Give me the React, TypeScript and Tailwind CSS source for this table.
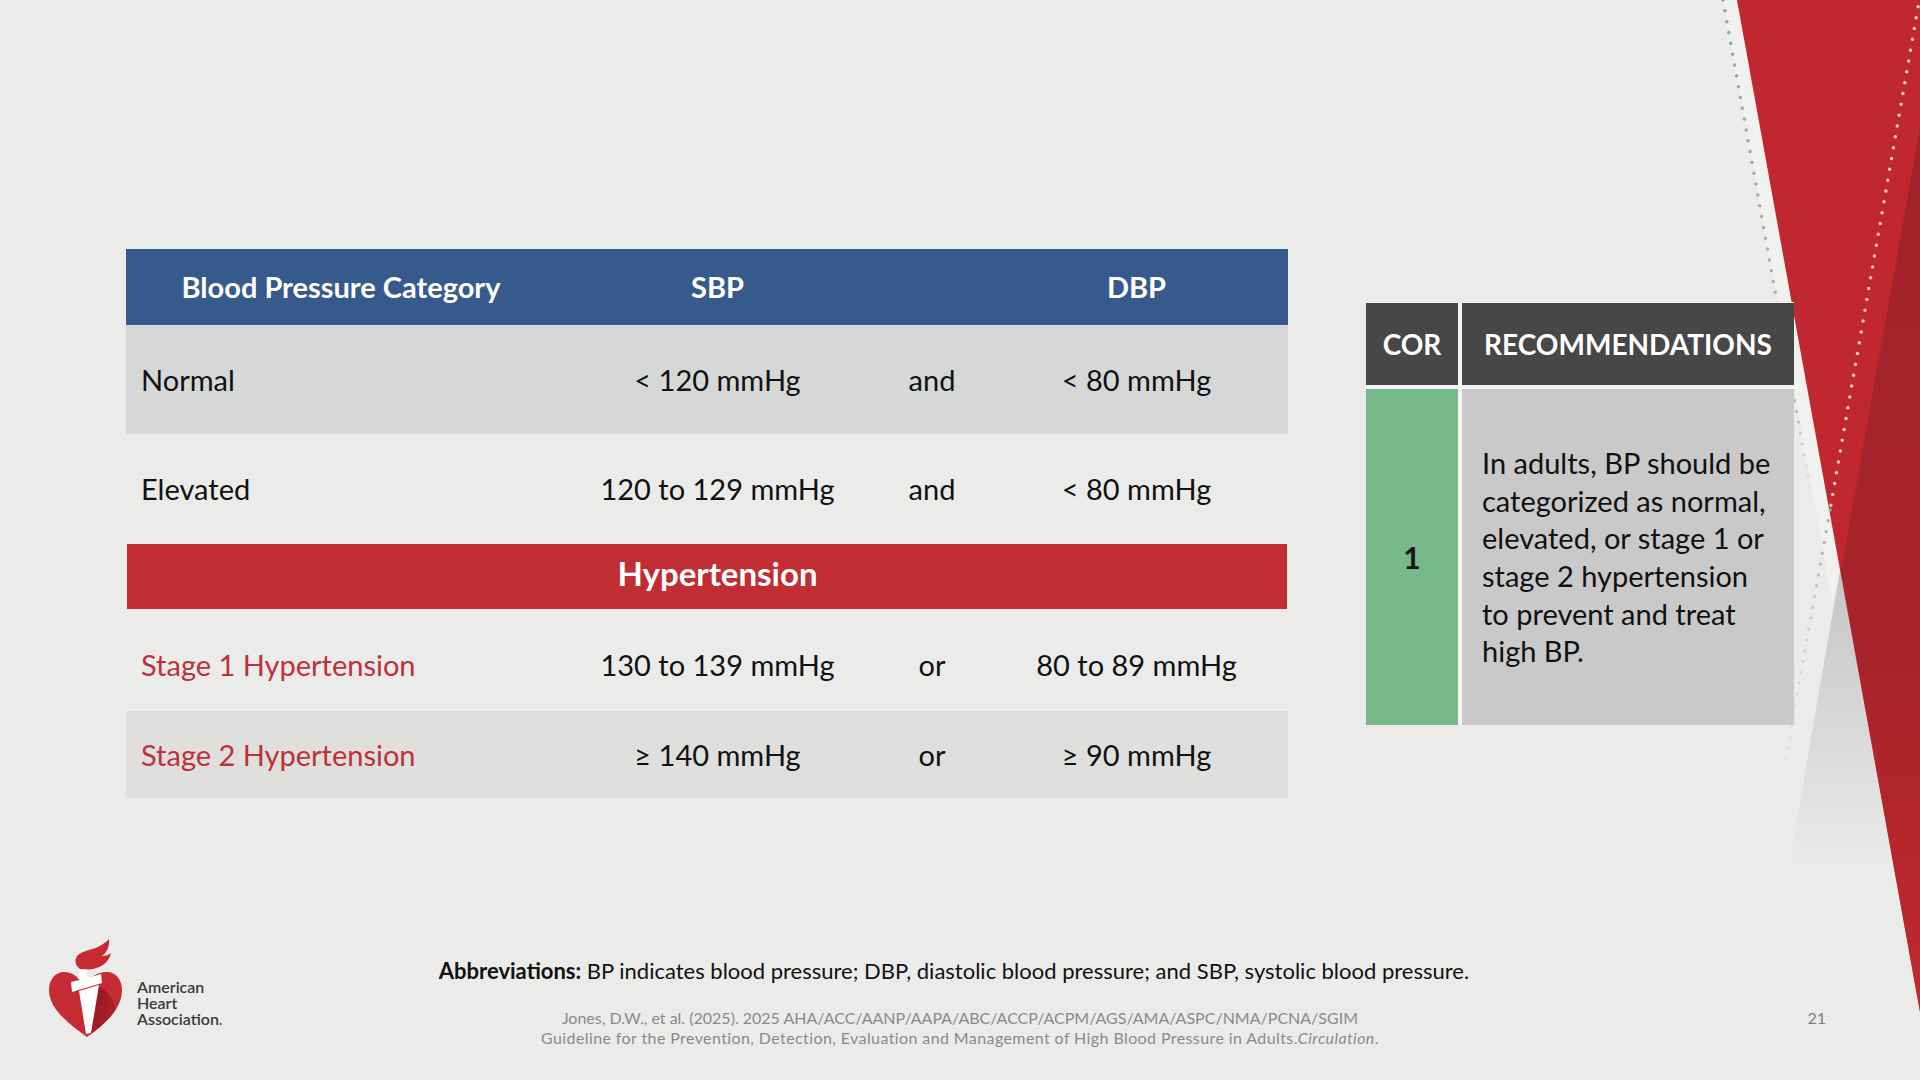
import React from 'react';

const rows = [
  { label: 'Normal', sbp: '< 120 mmHg', join: 'and', dbp: '< 80 mmHg', box: 'h-[109px] bg-[#d6d8d8]', labelTone: 'text-[#111111]' },
  { label: 'Elevated', sbp: '120 to 129 mmHg', join: 'and', dbp: '< 80 mmHg', box: 'h-[110px]', labelTone: 'text-[#111111]' },
];

const stages = [
  { label: 'Stage 1 Hypertension', sbp: '130 to 139 mmHg', join: 'or', dbp: '80 to 89 mmHg', box: 'h-[102px] pt-[10px]' },
  { label: 'Stage 2 Hypertension', sbp: '≥ 140 mmHg', join: 'or', dbp: '≥ 90 mmHg', box: 'h-[87px] bg-[#dfdfde]' },
];

const recLines = [
  'In adults, BP should be',
  'categorized as normal,',
  'elevated, or stage 1 or',
  'stage 2 hypertension',
  'to prevent and treat',
  'high BP.',
];

const heart =
  'M38 47 C34 39 27 34 19 34 C10 34 4 42 4 52 C4 71 24 86 42 99 C60 86 77 71 77 52 C77 42 71 34 62 34 C52 34 44 40 38 47 Z';

const AhaLogo = () => (
  <svg width="80" height="100" viewBox="0 0 80 100">
    <defs>
      <clipPath id="aha-heart">
        <path d={heart} />
      </clipPath>
      <linearGradient id="aha-shade" x1="0" y1="0" x2="1" y2="1">
        <stop offset="0" stopColor="#8f1820" />
        <stop offset="1" stopColor="#b8232c" />
      </linearGradient>
    </defs>
    <path d={heart} fill="#c62a32" />
    <g clipPath="url(#aha-heart)">
      <path d="M53 48 C62 52 70 62 72 76 L60 104 L44 104 Z" fill="url(#aha-shade)" />
    </g>
    {/* torch handle + rim */}
    <path d="M34 53 L54 47 L46 95 L41 96 Z" fill="#ffffff" />
    <path d="M26 44 C36 42 46 39 56 36 L57 45 C47 48 37 51 27 54 Z" fill="#ffffff" />
    <path d="M33 41 C32 35 35 31 40 30 L44 31 C41 34 41 38 43 40 Z" fill="#ffffff" />
    {/* flame */}
    <path
      d="M35 31 C28 26 29 17 38 14 C46 11 53 10 58 6 C61 4 63 2 64 1 C65 8 62 14 57 18 C61 18 64 17 66 15 C64 24 57 29 48 31 C44 32 39 31 35 31 Z"
      fill="#c62a32"
    />
  </svg>
);

const Decoration = () => (
  <svg className="absolute inset-0 w-full h-full pointer-events-none" viewBox="0 0 1920 1080" preserveAspectRatio="none">
    <defs>
      <linearGradient id="dark-red" x1="0" y1="0" x2="0" y2="1">
        <stop offset="0" stopColor="#a2222a" />
        <stop offset="0.6" stopColor="#a8242b" />
        <stop offset="1" stopColor="#c1282e" />
      </linearGradient>
      <linearGradient id="grey-wedge" x1="0" y1="0" x2="0" y2="1">
        <stop offset="0" stopColor="#c4c4c4" />
        <stop offset="0.55" stopColor="#d9d9d9" />
        <stop offset="1" stopColor="#ebebea" />
      </linearGradient>
      <linearGradient id="fade-b" gradientUnits="userSpaceOnUse" x1="0" y1="0" x2="0" y2="560">
        <stop offset="0" stopColor="#9c9c9c" />
        <stop offset="0.7" stopColor="#b4b4b4" />
        <stop offset="1" stopColor="#ebebea" stopOpacity="0" />
      </linearGradient>
      <linearGradient id="fade-a" gradientUnits="userSpaceOnUse" x1="0" y1="510" x2="0" y2="880">
        <stop offset="0" stopColor="#a9a9a9" />
        <stop offset="1" stopColor="#ebebea" stopOpacity="0" />
      </linearGradient>
    </defs>
    <path d="M1723 0 L1737 0 L1841 571 L1832 600 Z" fill="#f1f1f0" />
    <path d="M1841 565 L1896 870 L1788 870 Z" fill="url(#grey-wedge)" />
    <path d="M1737 0 L1920 0 L1920 1012 Z" fill="#c1272e" />
    <path d="M1920 127 L1841 571 L1920 1012 Z" fill="url(#dark-red)" />
    <line x1="1723" y1="0" x2="1823" y2="560" stroke="url(#fade-b)" strokeWidth="3.5" strokeLinecap="round" strokeDasharray="0 11" />
    <line x1="1920" y1="-4" x2="1830" y2="510" stroke="#eecaca" strokeWidth="3.5" strokeLinecap="round" strokeDasharray="0 11" />
    <line x1="1830" y1="510" x2="1764" y2="880" stroke="url(#fade-a)" strokeWidth="3.5" strokeLinecap="round" strokeDasharray="0 11" />
  </svg>
);

export default function App() {
  return (
    <div className="relative w-[1920px] h-[1080px] overflow-hidden bg-[#ebebea] font-['Lato',sans-serif]">
      <Decoration />

      <div className="relative flex flex-col h-full">
        <main className="flex items-start pl-[126px] pt-[249px]">
          {/* BP TABLE */}
          <div className="w-[1162px] flex flex-col text-[29px] text-[#111111]">
            <div className="grid grid-cols-[430px_323px_106px_303px] h-[76px] items-center bg-[#375a8d] text-white font-bold">
              <div className="text-center">Blood Pressure Category</div>
              <div className="text-center">SBP</div>
              <div />
              <div className="text-center">DBP</div>
            </div>

            {rows.map((r) => (
              <div key={r.label} className={`grid grid-cols-[430px_323px_106px_303px] items-center ${r.box}`}>
                <div className={`pl-[15px] ${r.labelTone}`}>{r.label}</div>
                <div className="text-center">{r.sbp}</div>
                <div className="text-center">{r.join}</div>
                <div className="text-center">{r.dbp}</div>
              </div>
            ))}

            <div className="px-px">
              <div className="grid grid-cols-[429px_323px_106px_302px] h-[65px] items-center pb-[6px] bg-[#c02d33] text-white font-bold text-[33px]">
                <div />
                <div className="text-center">Hypertension</div>
              </div>
            </div>

            {stages.map((r) => (
              <div key={r.label} className={`grid grid-cols-[430px_323px_106px_303px] items-center ${r.box}`}>
                <div className="pl-[15px] text-[#bf3039]">{r.label}</div>
                <div className="text-center">{r.sbp}</div>
                <div className="text-center">{r.join}</div>
                <div className="text-center">{r.dbp}</div>
              </div>
            ))}
          </div>

          {/* COR TABLE */}
          <div className="ml-[78px] mt-[53px] w-[428px] grid grid-cols-[92px_332px] grid-rows-[82px_336px] gap-[4px] bg-[#f3f3f3] pr-px pt-px">
            <div className="flex items-center justify-center bg-[#474747] text-white font-bold text-[28px]">COR</div>
            <div className="flex items-center justify-center bg-[#474747] text-white font-bold text-[28px]">RECOMMENDATIONS</div>
            <div className="flex items-center justify-center bg-[#77b98a] text-[#141414] font-bold text-[30px]">1</div>
            <div className="flex items-center bg-[#c9c9c9] pl-[20px] text-[29px] leading-[37.7px] text-[#111111]">
              <div>
                {recLines.map((l) => (
                  <div key={l}>{l}</div>
                ))}
              </div>
            </div>
          </div>
        </main>

        {/* FOOTER */}
        <footer className="mt-auto grid grid-cols-[1fr_auto_1fr] items-end pb-[32px]">
          <div className="flex items-start gap-[12px] pl-[45px] mb-[10px]">
            <AhaLogo />
            <div className="mt-[41px] text-[16px] leading-[16px] font-semibold text-[#3b3b3b]">
              <div>American</div>
              <div>Heart</div>
              <div>Association<span className="text-[#c62a32]">.</span></div>
            </div>
          </div>

          <div className="flex flex-col items-center">
            <p className="text-[22px] leading-[26px] text-[#111111] whitespace-nowrap -ml-[12px]">
              <span className="font-bold">Abbreviations:</span> BP indicates blood pressure; DBP, diastolic blood pressure; and SBP, systolic blood pressure.
            </p>
            <div className="mt-[24px] text-[16px] leading-[20px] text-[#8a8a8a] text-center">
              <div>Jones, D.W., et al. (2025). 2025 AHA/ACC/AANP/AAPA/ABC/ACCP/ACPM/AGS/AMA/ASPC/NMA/PCNA/SGIM</div>
              <div className="tracking-[0.4px]">
                Guideline for the Prevention, Detection, Evaluation and Management of High Blood Pressure in Adults.<span className="italic">Circulation</span>.
              </div>
            </div>
          </div>

          <div className="text-right pr-[94px] mb-[20px] text-[16px] leading-[20px] text-[#7f7f7f]">21</div>
        </footer>
      </div>
    </div>
  );
}
